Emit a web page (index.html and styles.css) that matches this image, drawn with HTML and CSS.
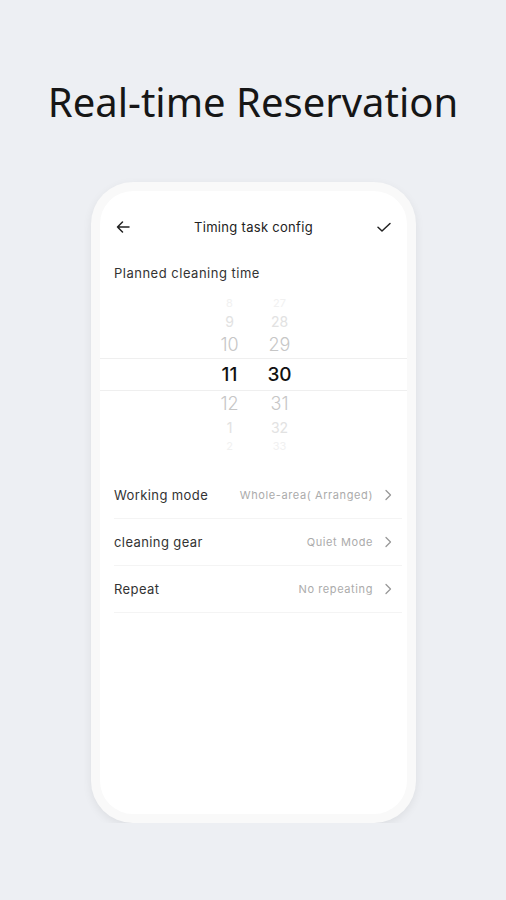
FILE: index.html
```html
<!DOCTYPE html>
<html lang="en">
<head>
    <meta charset="UTF-8">
    <meta name="viewport" content="width=device-width, initial-scale=1.0">
    <title>Real-time Reservation</title>
    <link rel="stylesheet" href="styles.css">
</head>
<body>
    <h1 class="headline">Real-time Reservation</h1>

    <div class="phone">
        <div class="screen">
            <div class="topbar">
                <svg class="icon" width="16" height="16" viewBox="0 0 16 16">
                    <path d="M14 8H2.5M7.5 3L2.5 8l5 5" fill="none" stroke="#222" stroke-width="1.5" stroke-linecap="round" stroke-linejoin="round"/>
                </svg>
                <span class="topbar-title">Timing task config</span>
                <svg class="icon" width="16" height="16" viewBox="0 0 16 16">
                    <path d="M2 8.2l4 3.8 8-7.5" fill="none" stroke="#222" stroke-width="1.5" stroke-linecap="round" stroke-linejoin="round"/>
                </svg>
            </div>

            <p class="section-label">Planned cleaning time</p>

            <!-- time wheel -->
            <div class="picker">
                <div class="wheel">
                    <div class="cell far">8</div>
                    <div class="cell near2">9</div>
                    <div class="cell near1">10</div>
                    <div class="cell selected">11</div>
                    <div class="cell near1">12</div>
                    <div class="cell near2">1</div>
                    <div class="cell far">2</div>
                </div>
                <div class="wheel">
                    <div class="cell far">27</div>
                    <div class="cell near2">28</div>
                    <div class="cell near1">29</div>
                    <div class="cell selected">30</div>
                    <div class="cell near1">31</div>
                    <div class="cell near2">32</div>
                    <div class="cell far">33</div>
                </div>
                <div class="band"></div>
            </div>

            <div class="settings">
                <div class="setting-row">
                    <span class="setting-name">Working mode</span>
                    <span class="setting-value">Whole-area( Arranged)</span>
                    <svg class="chevron" width="8" height="12" viewBox="0 0 8 12"><path d="M2 1.5L6.5 6 2 10.5" fill="none" stroke="#999" stroke-width="1.3" stroke-linecap="round" stroke-linejoin="round"/></svg>
                </div>
                <div class="setting-row">
                    <span class="setting-name">cleaning gear</span>
                    <span class="setting-value">Quiet Mode</span>
                    <svg class="chevron" width="8" height="12" viewBox="0 0 8 12"><path d="M2 1.5L6.5 6 2 10.5" fill="none" stroke="#999" stroke-width="1.3" stroke-linecap="round" stroke-linejoin="round"/></svg>
                </div>
                <div class="setting-row">
                    <span class="setting-name">Repeat</span>
                    <span class="setting-value">No repeating</span>
                    <svg class="chevron" width="8" height="12" viewBox="0 0 8 12"><path d="M2 1.5L6.5 6 2 10.5" fill="none" stroke="#999" stroke-width="1.3" stroke-linecap="round" stroke-linejoin="round"/></svg>
                </div>
            </div>
        </div>
    </div>
</body>
</html>
```

FILE: styles.css
```css
body {
    margin: 0;
    background-color: #edeff3;
    font-family: "Noto Sans", sans-serif;
    color: #222;
}

.headline {
    margin: 0;
    padding-top: 76px;
    height: 106px;
    text-align: center;
    font-size: 40px;
    font-weight: 400;
    color: #161616;
    line-height: 52px;
}

.phone {
    width: 307px;
    height: 623px;
    margin: 0 0 0 91px;
    padding: 9px;
    background-color: #f9f9f9;
    border-radius: 42px;
    box-shadow: 0 3px 10px rgba(0, 0, 0, 0.07);
}

.screen {
    height: 100%;
    background-color: #fff;
    border-radius: 33px;
    font-family: Inter, "Noto Sans", sans-serif;
    overflow: hidden;
}

.topbar {
    display: flex;
    align-items: center;
    justify-content: space-between;
    padding: 27px 15px 0 15px;
    height: 18px;
}

.icon {
    display: block;
}

.topbar-title {
    font-size: 13px;
    letter-spacing: 0.3px;
    color: #222;
}

.section-label {
    margin: 0;
    padding: 29px 0 0 14px;
    font-size: 13px;
    letter-spacing: 0.5px;
    color: #333;
    height: 24px;
}

.picker {
    position: relative;
    display: flex;
    justify-content: center;
    gap: 14px;
    margin-top: 5px;
    padding-left: 2px;
}

.wheel {
    width: 36px;
    display: flex;
    flex-direction: column;
    align-items: center;
}

.cell {
    display: flex;
    align-items: center;
    justify-content: center;
    color: #c9c9c9;
}

.far {
    height: 17px;
    font-size: 11px;
    color: #f1f1f1;
}

.near2 {
    height: 20px;
    font-size: 14px;
    color: #e2e2e2;
}

.near1 {
    height: 27px;
    font-size: 18px;
    font-weight: 300;
    color: #c6c6c6;
}

.selected {
    height: 32px;
    font-size: 19px;
    font-weight: 500;
    color: #111;
}

.band {
    position: absolute;
    left: 0;
    right: 0;
    top: 64px;
    height: 31px;
    border-top: 1px solid #efefef;
    border-bottom: 1px solid #efefef;
}

.settings {
    margin-top: 18px;
    padding: 0 5px 0 14px;
}

.setting-row {
    display: flex;
    align-items: center;
    height: 46px;
    border-bottom: 1px solid #f4f4f4;
}

.setting-name {
    flex: 1;
    font-size: 13px;
    letter-spacing: 0.4px;
    color: #333;
}

.setting-value {
    font-size: 11px;
    letter-spacing: 0.6px;
    color: #ababab;
    margin-right: 11px;
}

.chevron {
    display: block;
    margin-right: 10px;
}
```
